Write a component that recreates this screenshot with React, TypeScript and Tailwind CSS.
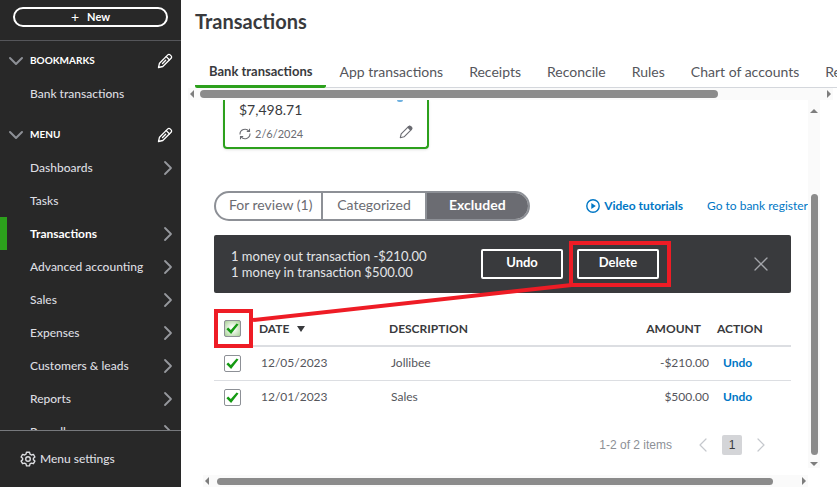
import React, { useState } from 'react';
import { ChevronDown, ChevronRight, ChevronLeft, X } from 'lucide-react';

const menuItems = [
  { name: 'Dashboards', expandable: true },
  { name: 'Tasks', expandable: false },
  { name: 'Transactions', expandable: true },
  { name: 'Advanced accounting', expandable: true },
  { name: 'Sales', expandable: true },
  { name: 'Expenses', expandable: true },
  { name: 'Customers & leads', expandable: true },
  { name: 'Reports', expandable: true },
  { name: 'Payroll', expandable: true },
];

const tabs = [
  'Bank transactions',
  'App transactions',
  'Receipts',
  'Reconcile',
  'Rules',
  'Chart of accounts',
  'Recurring transactions',
];

const transactions = [
  { id: 1, date: '12/05/2023', description: 'Jollibee', amount: '-$210.00' },
  { id: 2, date: '12/01/2023', description: 'Sales', amount: '$500.00' },
];

const PencilIcon: React.FC<{ className?: string; filledTip?: boolean }> = ({ className, filledTip }) => (
  <svg
    viewBox="0 0 16 16"
    className={className}
    fill="none"
    stroke="currentColor"
    strokeWidth="1.3"
    strokeLinejoin="round"
    strokeLinecap="round"
    aria-hidden="true"
  >
    <path d="M1.5 14.5 2.5 10.2 10.8 1.9a1.6 1.6 0 0 1 2.3 0l1 1a1.6 1.6 0 0 1 0 2.3L5.8 13.5Z" />
    {filledTip ? (
      <path d="m10.3 2.8 2.9 2.9 1.2-1.3a1.2 1.2 0 0 0 0-1.6l-1.3-1.3a1.2 1.2 0 0 0-1.7 0Z" fill="currentColor" />
    ) : (
      <path d="m9.2 3.6 3.2 3.2M5.5 10.5l3.2-3.2" />
    )}
  </svg>
);

const GearIcon = () => (
  <svg viewBox="0 0 16 16" className="h-4 w-4" fill="none" stroke="currentColor" strokeWidth="1.4" strokeLinejoin="round" aria-hidden="true">
    <path d="M6.5 1.2h3l.5 2 1.4.8 2-.6 1.5 2.6-1.5 1.3v1.5l1.5 1.3-1.5 2.6-2-.6-1.4.8-.5 2h-3l-.5-2-1.4-.8-2 .6-1.5-2.6 1.5-1.3V7.3l-1.5-1.3 1.5-2.6 2 .6L6 3.2Z" />
    <circle cx="8" cy="8" r="2.3" />
  </svg>
);

const Arrow: React.FC<{ d: string }> = ({ d }) => (
  <svg viewBox="0 0 8 8" className="h-2 w-2 shrink-0 fill-[#7d7d7d]" aria-hidden="true">
    <path d={d} />
  </svg>
);

const LEFT = 'M6 0v8L2 4Z';
const RIGHT = 'M2 0v8l4-4Z';
const UP = 'M0 6h8L4 2Z';
const DOWN = 'M0 2h8L4 6Z';

type CheckboxProps = { label: string; checked: boolean; onChange: () => void; green?: boolean };

const Checkbox: React.FC<CheckboxProps> = ({ label, checked, onChange, green }) => (
  <span className="relative block h-[17px] w-[17px]">
    <input
      type="checkbox"
      aria-label={label}
      checked={checked}
      onChange={onChange}
      className={`block h-full w-full appearance-none rounded-xs border border-[#8d9096] ${
        green ? 'bg-[radial-gradient(circle,#ffffff_15%,#a5cf93_100%)]' : 'bg-white'
      }`}
    />
    {checked && (
      <svg viewBox="0 0 17 17" className="pointer-events-none absolute inset-0 fill-[#159a13]" aria-hidden="true">
        <path d="M2.4 9.2 4.2 7.6l2.6 2.3L12.6 3.4l1.9 1L7.1 13.9Z" />
      </svg>
    )}
  </span>
);

const Sidebar = () => (
  <aside className="flex w-[181px] shrink-0 flex-col bg-[#282828] text-xs font-medium text-[#dcdde0]">
    <div className="h-[41px] shrink-0 border-b border-[#55565a] px-[13px] pt-[7px]">
      <button className="flex h-5 w-full items-center justify-center gap-2 rounded-full border-2 border-white text-[11px] font-bold text-white">
        <span className="text-sm font-normal">+</span> New
      </button>
    </div>
    <nav className="min-h-0 flex-1 overflow-hidden pt-[3px]">
      <div className="flex h-[33px] items-center pr-2 pl-1">
        <ChevronDown className="h-6 w-6 text-[#8d9096]" strokeWidth={2} />
        <span className="ml-0.5 flex-1 text-[10px] font-bold text-white">BOOKMARKS</span>
        <button aria-label="Edit bookmarks" className="text-white"><PencilIcon className="h-4 w-4" /></button>
      </div>
      <a href="#" className="flex h-[33px] items-center pl-[30px]">Bank transactions</a>
      <div className="mt-2 flex h-[33px] items-center pr-2 pl-1">
        <ChevronDown className="h-6 w-6 text-[#8d9096]" strokeWidth={2} />
        <span className="ml-0.5 flex-1 text-[10px] font-bold text-white">MENU</span>
        <button aria-label="Edit menu" className="text-white"><PencilIcon className="h-4 w-4" /></button>
      </div>
      <ul>
        {menuItems.map((item) => (
          <li key={item.name}>
            <a
              href="#"
              className={`flex h-[33px] items-center justify-between border-l-[7px] pr-px pl-[23px] ${
                item.name === 'Transactions' ? 'border-[#2ca01c] font-bold text-white' : 'border-transparent'
              }`}
            >
              {item.name}
              {item.expandable && <ChevronRight className="h-6 w-6 text-[#96989d]" strokeWidth={1.8} />}
            </a>
          </li>
        ))}
      </ul>
    </nav>
    <div className="h-[57px] shrink-0 border-t border-[#77797d]">
      <button className="flex h-[55px] items-center gap-1 pl-5">
        <GearIcon /> Menu settings
      </button>
    </div>
  </aside>
);

const App: React.FC = () => {
  const [activeTab, setActiveTab] = useState('Bank transactions');
  const [filter, setFilter] = useState('Excluded');
  const [selected, setSelected] = useState<number[]>([1, 2]);

  const toggle = (id: number) => {
    setSelected(selected.includes(id) ? selected.filter((s) => s !== id) : [...selected, id]);
  };
  const allSelected = selected.length === transactions.length;

  return (
    <div className="flex h-screen overflow-hidden bg-white font-['Lato','Open_Sans',sans-serif] text-[#393a3d]">
      <Sidebar />

      <main className="flex min-w-0 flex-1 flex-col">
        <h1 className="shrink-0 pt-[7px] pl-3.5 text-xl leading-7 font-bold">Transactions</h1>

        {/* Tabs */}
        <div className="mt-[21px] ml-3.5 flex h-8 shrink-0 overflow-hidden whitespace-nowrap" role="tablist">
          {tabs.map((tab) => (
            <button
              key={tab}
              role="tab"
              aria-selected={tab === activeTab}
              onClick={() => setActiveTab(tab)}
              className={`shrink-0 ${
                tab === activeTab
                  ? 'rounded-b-xs border-b-3 border-[#2ca01c] px-3.5 pt-0.5 text-[13px] font-bold'
                  : 'border-b border-[#d4d7dc] px-[13px] text-sm text-[#55565c]'
              }`}
            >
              {tab}
            </button>
          ))}
        </div>
        <div className="mr-1 ml-[7px] flex h-3 shrink-0 items-center gap-1 bg-[#fafafa]">
          <Arrow d={LEFT} />
          <div className="flex-1"><div className="h-2 w-5/6 rounded-full bg-[#8b8b8b]" /></div>
          <Arrow d={RIGHT} />
        </div>

        <div className="mr-[17px] flex min-h-0 flex-1">
          <div className="flex min-w-0 flex-1 flex-col">
            <div className="min-h-0 flex-1 overflow-hidden pl-[33px]">
              {/* Account card */}
              <section className="relative ml-[9px] h-[49px] w-[206px] rounded-b border-2 border-t-0 border-[#2ca01c] px-3.5 shadow">
                <span className="absolute top-0 right-6 h-0.5 w-1.5 rounded-b-full bg-[#6fb1e0]" />
                <p className="pt-0.5 text-sm leading-4">$7,498.71</p>
                <div className="mt-1.5 flex items-center text-[11px] leading-5 text-[#6b6c72]">
                  <svg viewBox="0 0 12 12" className="mr-1 h-3 w-3" fill="none" stroke="currentColor" strokeWidth="1.1" aria-hidden="true">
                    <path d="M1 6.5A5 5 0 0 1 10 3.3M11 5.5A5 5 0 0 1 2 8.7M10.5.8v2.7H7.8M1.5 11.2V8.5h2.7" />
                  </svg>
                  <span className="flex-1">2/6/2024</span>
                  <button aria-label="Edit account"><PencilIcon className="mb-1 h-3.5 w-3.5" filledTip /></button>
                </div>
              </section>

              {/* Filters and links */}
              <div className="mt-[42px] flex items-center justify-between">
                <div className="flex h-[30px] w-[316px] shrink-0 overflow-hidden rounded-full border-2 border-[#8d9096] text-sm text-[#6b6c72]">
                  {['For review (1)', 'Categorized', 'Excluded'].map((name) => (
                    <button
                      key={name}
                      onClick={() => setFilter(name)}
                      className={`flex-1 border-l-2 border-[#8d9096] pb-0.5 first:border-l-0 first:pl-1 ${
                        name === filter ? 'bg-[#6b6c72] font-bold text-white' : ''
                      }`}
                    >
                      {name}
                    </button>
                  ))}
                </div>
                <div className="flex shrink-0 gap-6 text-xs text-[#0077c5]">
                  <a href="#" className="flex items-center gap-1 font-bold">
                    <svg viewBox="0 0 14 14" className="h-3.5 w-3.5" aria-hidden="true">
                      <circle cx="7" cy="7" r="6.2" fill="none" stroke="currentColor" strokeWidth="1.4" />
                      <path d="M5.3 4v6l4.5-3Z" fill="currentColor" />
                    </svg>
                    Video tutorials
                  </a>
                  <a href="#">Go to bank register</a>
                </div>
              </div>

              <div className="relative mt-3.5 mr-[17px]">
                {/* Batch actions */}
                <div className="flex h-[58px] items-center rounded-xs bg-[#393a3d] pr-[18px] pl-[17px] text-[13px] text-[#e3e5e8]">
                  <p className="flex-1 leading-4">
                    1 money out transaction -$210.00
                    <br />
                    1 money in transaction $500.00
                  </p>
                  <button className="h-[30px] w-[82px] rounded-xs border-2 border-white pb-0.5 font-bold text-white">Undo</button>
                  <div className="relative ml-3.5">
                    <button className="block h-[30px] w-[82px] rounded-xs border-2 border-white pb-0.5 font-bold text-white">Delete</button>
                    <span className="pointer-events-none absolute -inset-y-2 -right-3 -left-2 border-4 border-[#ee1c25]" />
                  </div>
                  <button aria-label="Close" className="ml-[90px] text-[#a3a5aa]">
                    <X className="h-6 w-6" strokeWidth={1.3} />
                  </button>
                </div>

                <table className="mt-[19px] w-full table-fixed text-left text-xs">
                  <thead>
                    <tr className="h-[34px] border-b-2 border-[#dcdee2]">
                      <th className="w-[45px] pl-2.5">
                        <div className="relative w-[17px]">
                          <Checkbox
                            green
                            label="Select all"
                            checked={allSelected}
                            onChange={() => setSelected(allSelected ? [] : transactions.map((t) => t.id))}
                          />
                          <span className="pointer-events-none absolute -inset-y-[11px] -right-3 -left-2.5 border-4 border-[#ee1c25]" />
                        </div>
                      </th>
                      <th className="w-[130px]">
                        <button className="flex items-center gap-2">
                          DATE
                          <svg viewBox="0 0 8 6" className="h-1.5 w-2 fill-[#393a3d]" aria-hidden="true"><path d="M0 0h8L4 6Z" /></svg>
                        </button>
                      </th>
                      <th>DESCRIPTION</th>
                      <th className="w-[130px] pr-2 text-right">AMOUNT</th>
                      <th className="w-[82px] pl-2">ACTION</th>
                    </tr>
                  </thead>
                  <tbody className="text-[#55565c]">
                    {transactions.map((t) => (
                      <tr key={t.id} className="h-[34px] border-b border-[#dcdee2] last:border-b-0">
                        <td className="pl-2.5">
                          <Checkbox label={`Select ${t.description}`} checked={selected.includes(t.id)} onChange={() => toggle(t.id)} />
                        </td>
                        <td className="pl-0.5">{t.date}</td>
                        <td className="pl-0.5">{t.description}</td>
                        <td className="text-right">{t.amount}</td>
                        <td className="pl-3.5"><button className="font-bold text-[#0077c5]">Undo</button></td>
                      </tr>
                    ))}
                  </tbody>
                </table>

                <svg className="pointer-events-none absolute inset-0 h-full w-full" aria-hidden="true">
                  <line x1="39" y1="85" x2="62%" y2="50" stroke="#ee1c25" strokeWidth="4" />
                </svg>

                {/* Pagination */}
                <div className="mt-[19px] mr-[18px] flex items-center justify-end font-['Liberation_Sans',Arial,sans-serif] text-xs text-[#8d9096]">
                  <span>1-2 of 2 items</span>
                  <button aria-label="Previous page" className="ml-[19px]"><ChevronLeft className="h-6 w-6 text-[#c5c8cd]" strokeWidth={1.2} /></button>
                  <button className="mx-[7px] h-5 w-5 rounded-xs bg-[#d4d5d8] text-[#393a3d]">1</button>
                  <button aria-label="Next page"><ChevronRight className="h-6 w-6 text-[#c5c8cd]" strokeWidth={1.2} /></button>
                </div>
              </div>
            </div>

            <div className="ml-[22px] flex h-3 shrink-0 items-center gap-1 bg-[#fafafa]">
              <Arrow d={LEFT} />
              <div className="flex-1 pl-0.5"><div className="h-[7px] w-24/25 rounded-full bg-[#8b8b8b]" /></div>
              <Arrow d={RIGHT} />
            </div>
          </div>

          <div className="mb-[19px] flex w-3 shrink-0 flex-col items-center bg-[#fafafa] pt-[7px]">
            <Arrow d={UP} />
            <div className="flex w-[7px] flex-1 flex-col justify-end py-[5px]">
              <div className="h-7/9 rounded-full bg-[#8b8b8b]" />
            </div>
            <Arrow d={DOWN} />
          </div>
        </div>
      </main>
    </div>
  );
};

export default App;
